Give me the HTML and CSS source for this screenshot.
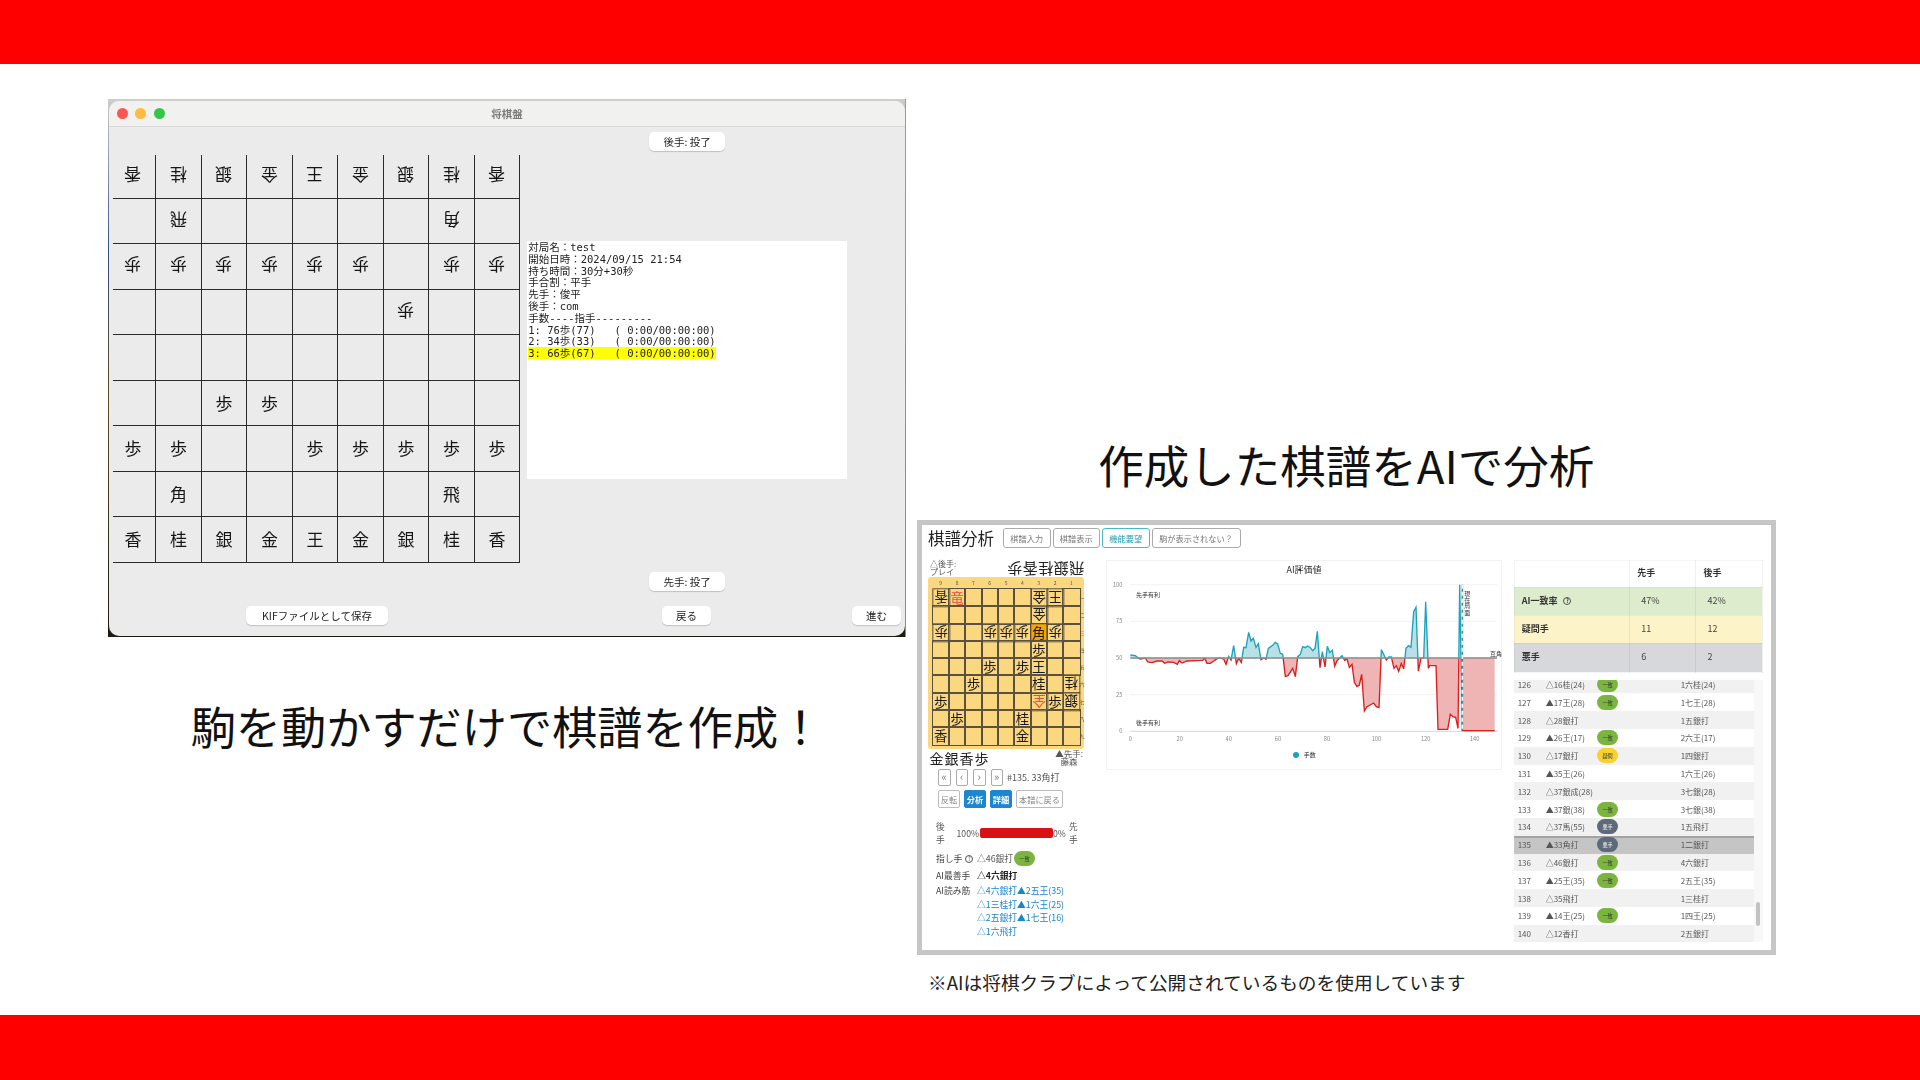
FILE: index.html
```html
<!DOCTYPE html>
<html lang="ja">
<head>
    <meta charset="UTF-8">
    <meta name="viewport" content="width=device-width, initial-scale=1.0">
    <title>将棋盤</title>
    <link rel="stylesheet" href="styles.css">
</head>
<body>
<div class="slide">
    <div class="red-bar top"></div>

    <div class="content">
        <!-- left: desktop app -->
        <div class="col-left">
            <div class="shot">
                <div class="win">
                    <div class="titlebar">
                        <div class="lights"><i class="l-red"></i><i class="l-yellow"></i><i class="l-green"></i></div>
                        <div class="win-title">将棋盤</div>
                    </div>
                    <div class="win-main">
                        <div class="board">
                            <div class="sq"><span class="flip">香</span></div><div class="sq"><span class="flip">桂</span></div><div class="sq"><span class="flip">銀</span></div><div class="sq"><span class="flip">金</span></div><div class="sq"><span class="flip">王</span></div><div class="sq"><span class="flip">金</span></div><div class="sq"><span class="flip">銀</span></div><div class="sq"><span class="flip">桂</span></div><div class="sq"><span class="flip">香</span></div>
                            <div class="sq"></div><div class="sq"><span class="flip">飛</span></div><div class="sq"></div><div class="sq"></div><div class="sq"></div><div class="sq"></div><div class="sq"></div><div class="sq"><span class="flip">角</span></div><div class="sq"></div>
                            <div class="sq"><span class="flip">歩</span></div><div class="sq"><span class="flip">歩</span></div><div class="sq"><span class="flip">歩</span></div><div class="sq"><span class="flip">歩</span></div><div class="sq"><span class="flip">歩</span></div><div class="sq"><span class="flip">歩</span></div><div class="sq"></div><div class="sq"><span class="flip">歩</span></div><div class="sq"><span class="flip">歩</span></div>
                            <div class="sq"></div><div class="sq"></div><div class="sq"></div><div class="sq"></div><div class="sq"></div><div class="sq"></div><div class="sq"><span class="flip">歩</span></div><div class="sq"></div><div class="sq"></div>
                            <div class="sq"></div><div class="sq"></div><div class="sq"></div><div class="sq"></div><div class="sq"></div><div class="sq"></div><div class="sq"></div><div class="sq"></div><div class="sq"></div>
                            <div class="sq"></div><div class="sq"></div><div class="sq">歩</div><div class="sq">歩</div><div class="sq"></div><div class="sq"></div><div class="sq"></div><div class="sq"></div><div class="sq"></div>
                            <div class="sq">歩</div><div class="sq">歩</div><div class="sq"></div><div class="sq"></div><div class="sq">歩</div><div class="sq">歩</div><div class="sq">歩</div><div class="sq">歩</div><div class="sq">歩</div>
                            <div class="sq"></div><div class="sq">角</div><div class="sq"></div><div class="sq"></div><div class="sq"></div><div class="sq"></div><div class="sq"></div><div class="sq">飛</div><div class="sq"></div>
                            <div class="sq">香</div><div class="sq">桂</div><div class="sq">銀</div><div class="sq">金</div><div class="sq">王</div><div class="sq">金</div><div class="sq">銀</div><div class="sq">桂</div><div class="sq">香</div>
                        </div>
                        <div class="win-side">
                            <button class="mac-btn resign-top">後手: 投了</button>
                            <div class="kif">対局名：test
開始日時：2024/09/15 21:54
持ち時間：30分+30秒
手合割：平手
先手：俊平
後手：com
手数----指手---------
1: 76歩(77)   ( 0:00/00:00:00)
2: 34歩(33)   ( 0:00/00:00:00)
<span class="kif-now">3: 66歩(67)   ( 0:00/00:00:00)</span></div>
                            <button class="mac-btn resign-bottom">先手: 投了</button>
                        </div>
                    </div>
                    <div class="win-foot">
                        <button class="mac-btn save">KIFファイルとして保存</button>
                        <button class="mac-btn back">戻る</button>
                        <button class="mac-btn next">進む</button>
                    </div>
                </div>
            </div>
            <p class="caption">駒を動かすだけで棋譜を作成！</p>
        </div>

        <!-- right: web analysis -->
        <div class="col-right">
            <h1 class="caption heading">作成した棋譜をAIで分析</h1>
            <div class="panel">
                <div class="panel-head">
                    <div class="panel-title">棋譜分析</div>
                    <a class="tab w47">棋譜入力</a>
                    <a class="tab w47">棋譜表示</a>
                    <a class="tab w47 tab-teal">機能要望</a>
                    <a class="tab w89">駒が表示されない？</a>
                </div>
                <div class="panel-body">
                    <div class="play">
                        <div class="holder top">
                            <div class="who">△後手:<br>プレイ</div>
                            <div class="hand hand-rev"><span>飛</span><span>銀</span><span>桂</span><span>香</span><span>歩</span></div>
                        </div>
                        <div class="mini">
                            <b>9</b><b>8</b><b>7</b><b>6</b><b>5</b><b>4</b><b>3</b><b>2</b><b>1</b><b></b>
                            <i class="rev">香</i><i class="red">竜</i><i></i><i></i><i></i><i></i><i class="rev">金</i><i class="rev">王</i><i></i><b>一</b>
                            <i></i><i></i><i></i><i></i><i></i><i></i><i class="rev">金</i><i></i><i></i><b>二</b>
                            <i class="rev">歩</i><i></i><i></i><i class="rev">歩</i><i class="rev">歩</i><i class="rev">歩</i><i class="hot">角</i><i class="rev">歩</i><i></i><b>三</b>
                            <i></i><i></i><i></i><i></i><i></i><i></i><i>歩</i><i></i><i></i><b>四</b>
                            <i></i><i></i><i></i><i>歩</i><i></i><i>歩</i><i>王</i><i></i><i></i><b>五</b>
                            <i></i><i></i><i>歩</i><i></i><i></i><i></i><i>桂</i><i></i><i class="rev">桂</i><b>六</b>
                            <i>歩</i><i></i><i></i><i></i><i></i><i></i><i class="red rev">全</i><i>歩</i><i class="rev">銀</i><b>七</b>
                            <i></i><i>歩</i><i></i><i></i><i></i><i>桂</i><i></i><i></i><i></i><b>八</b>
                            <i>香</i><i></i><i></i><i></i><i></i><i>金</i><i></i><i></i><i></i><b>九</b>
                        </div>
                        <div class="holder bottom">
                            <div class="hand"><span>金</span><span>銀</span><span>香</span><span>歩</span></div>
                            <div class="who who-right">▲先手:<br>藤森</div>
                        </div>
                        <div class="nav">
                            <a class="nav-btn">«</a><a class="nav-btn">‹</a><a class="nav-btn">›</a><a class="nav-btn">»</a>
                            <span class="nav-text">#135. 33角打</span>
                        </div>
                        <div class="tools">
                            <a class="tool">反転</a><a class="tool tool-on">分析</a><a class="tool tool-on">詳細</a><a class="tool tool-wide">本譜に戻る</a>
                        </div>
                        <div class="meter">
                            <span class="meter-side">後<br>手</span>
                            <span class="meter-num">100%</span>
                            <span class="meter-bar"></span>
                            <span class="meter-zero">0%</span>
                            <span class="meter-side">先<br>手</span>
                        </div>
                        <div class="info">
                            <div class="info-key info-first">指し手 <span class="help">?</span></div>
                            <div class="info-val info-move">△46銀打<span class="badge good">一致</span></div>
                            <div class="info-key">AI最善手</div>
                            <div class="info-val info-best">△4六銀打</div>
                            <div class="info-key">AI読み筋</div>
                            <div class="info-val info-line">△4六銀打▲2五王(35)<br>△1三桂打▲1六王(25)<br>△2五銀打▲1七王(16)<br>△1六飛打</div>
                        </div>
                    </div>

                    <div class="chart">
                        <svg class="chart-svg" viewBox="32 15 1190 630" width="396.7" height="210">
                            <defs>
                                <clipPath id="cutUp"><rect x="0" y="0" width="1260" height="309"/></clipPath>
                                <clipPath id="cutDown"><rect x="0" y="309" width="1260" height="340"/></clipPath>
                                <polyline id="evalLine" points="105,300 120,302 130,310 135,312 150,309 157,321 170,323 185,318 200,318 208,325 218,321 235,322 246,328 252,317 260,324 275,318 300,317 322,316 328,309 335,325 345,325 355,318 362,313 372,308 385,312 392,328 400,304 407,315 415,272 423,326 430,310 438,322 445,277 452,278 460,232 467,258 474,250 482,277 489,266 497,314 505,309 512,313 519,280 533,270 540,262 547,267 555,295 562,298 570,364 578,362 592,340 600,365 607,305 615,298 622,275 630,278 637,273 645,278 652,287 659,280 666,229 674,338 681,290 689,336 696,274 703,293 711,286 718,333 725,317 740,302 748,316 755,312 762,337 770,328 777,382 785,395 792,390 799,358 807,468 815,455 835,444 843,455 851,458 858,284 865,298 873,315 880,306 888,306 896,340 903,332 910,349 918,325 925,342 932,280 940,272 947,277 955,170 962,157 969,348 977,310 985,308 991,140 999,340 1003,332 1022,332 1028,523 1057,523 1065,478 1073,485 1081,487 1088,520 1093,89 1101,527 1198,527"/>
                                <polygon id="evalArea" points="105,309 105,300 120,302 130,310 135,312 150,309 157,321 170,323 185,318 200,318 208,325 218,321 235,322 246,328 252,317 260,324 275,318 300,317 322,316 328,309 335,325 345,325 355,318 362,313 372,308 385,312 392,328 400,304 407,315 415,272 423,326 430,310 438,322 445,277 452,278 460,232 467,258 474,250 482,277 489,266 497,314 505,309 512,313 519,280 533,270 540,262 547,267 555,295 562,298 570,364 578,362 592,340 600,365 607,305 615,298 622,275 630,278 637,273 645,278 652,287 659,280 666,229 674,338 681,290 689,336 696,274 703,293 711,286 718,333 725,317 740,302 748,316 755,312 762,337 770,328 777,382 785,395 792,390 799,358 807,468 815,455 835,444 843,455 851,458 858,284 865,298 873,315 880,306 888,306 896,340 903,332 910,349 918,325 925,342 932,280 940,272 947,277 955,170 962,157 969,348 977,310 985,308 991,140 999,340 1003,332 1022,332 1028,523 1057,523 1065,478 1073,485 1081,487 1088,520 1093,89 1101,527 1198,527 1198,309"/>
                            </defs>
                            <text class="c-title" x="626" y="53" text-anchor="middle">AI評価値</text>
                            <line class="c-grid" x1="105" x2="1205" y1="89" y2="89"/>
                            <line class="c-grid" x1="105" x2="1205" y1="199" y2="199"/>
                            <line class="c-grid" x1="105" x2="1205" y1="419" y2="419"/>
                            <line class="c-axis" x1="105" x2="1205" y1="529" y2="529"/>
                            <text class="c-tick" x="81" y="95" text-anchor="end">100</text>
                            <text class="c-tick" x="81" y="205" text-anchor="end">75</text>
                            <text class="c-tick" x="81" y="315" text-anchor="end">50</text>
                            <text class="c-tick" x="81" y="425" text-anchor="end">25</text>
                            <text class="c-tick" x="81" y="535" text-anchor="end">0</text>
                            <text class="c-tick" x="105" y="559" text-anchor="middle">0</text>
                            <text class="c-tick" x="253" y="559" text-anchor="middle">20</text>
                            <text class="c-tick" x="400" y="559" text-anchor="middle">40</text>
                            <text class="c-tick" x="548" y="559" text-anchor="middle">60</text>
                            <text class="c-tick" x="695" y="559" text-anchor="middle">80</text>
                            <text class="c-tick" x="843" y="559" text-anchor="middle">100</text>
                            <text class="c-tick" x="991" y="559" text-anchor="middle">120</text>
                            <text class="c-tick" x="1138" y="559" text-anchor="middle">140</text>
                            <use class="c-fill-up" href="#evalArea" clip-path="url(#cutUp)"/>
                            <use class="c-fill-down" href="#evalArea" clip-path="url(#cutDown)"/>
                            <use class="c-line-up" href="#evalLine" clip-path="url(#cutUp)"/>
                            <use class="c-line-down" href="#evalLine" clip-path="url(#cutDown)"/>
                            <line class="c-mid" x1="105" x2="1205" y1="309" y2="309"/>
                            <line class="c-now" x1="1101" x2="1101" y1="89" y2="527"/>
                            <line class="c-now-dash" x1="1101" x2="1101" y1="89" y2="527"/>
                            <text class="c-note" x="122" y="127">先手有利</text>
                            <text class="c-note" x="122" y="511">後手有利</text>
                            <text class="c-note" x="1184" y="304">互角</text>
                            <text class="c-note c-vert" x="1116" y="106">現在局面</text>
                            <circle class="c-dot" cx="602" cy="600" r="9"/>
                            <text class="c-note" x="625" y="607">手数</text>
                        </svg>
                    </div>

                    <div class="stats">
                        <table class="summary">
                            <tr class="s-head"><td></td><td>先手</td><td>後手</td></tr>
                            <tr class="s-green"><td>AI一致率 <span class="help help-lg">?</span></td><td>47%</td><td>42%</td></tr>
                            <tr class="s-yellow"><td>疑問手</td><td>11</td><td>12</td></tr>
                            <tr class="s-gray"><td>悪手</td><td>6</td><td>2</td></tr>
                        </table>
                        <div class="moves-wrap">
                            <div class="moves">
                                <div class="moves-in">
                                    <div class="mv"><span>126</span><span>△16桂(24)</span><span><em class="badge good">一致</em></span><span>1六桂(24)</span></div>
                                    <div class="mv"><span>127</span><span>▲17王(28)</span><span><em class="badge good">一致</em></span><span>1七王(28)</span></div>
                                    <div class="mv"><span>128</span><span>△28銀打</span><span></span><span>1五銀打</span></div>
                                    <div class="mv"><span>129</span><span>▲26王(17)</span><span><em class="badge good">一致</em></span><span>2六王(17)</span></div>
                                    <div class="mv"><span>130</span><span>△17銀打</span><span><em class="badge doubt">疑問</em></span><span>1四銀打</span></div>
                                    <div class="mv"><span>131</span><span>▲35王(26)</span><span></span><span>1六王(26)</span></div>
                                    <div class="mv"><span>132</span><span>△37銀成(28)</span><span></span><span>3七銀(28)</span></div>
                                    <div class="mv"><span>133</span><span>▲37銀(38)</span><span><em class="badge good">一致</em></span><span>3七銀(38)</span></div>
                                    <div class="mv"><span>134</span><span>△37馬(55)</span><span><em class="badge bad">悪手</em></span><span>1五飛打</span></div>
                                    <div class="mv mv-now"><span>135</span><span>▲33角打</span><span><em class="badge bad">悪手</em></span><span>1二銀打</span></div>
                                    <div class="mv"><span>136</span><span>△46銀打</span><span><em class="badge good">一致</em></span><span>4六銀打</span></div>
                                    <div class="mv"><span>137</span><span>▲25王(35)</span><span><em class="badge good">一致</em></span><span>2五王(35)</span></div>
                                    <div class="mv"><span>138</span><span>△35飛打</span><span></span><span>1三桂打</span></div>
                                    <div class="mv"><span>139</span><span>▲14王(25)</span><span><em class="badge good">一致</em></span><span>1四王(25)</span></div>
                                    <div class="mv"><span>140</span><span>△12香打</span><span></span><span>2五銀打</span></div>
                                </div>
                            </div>
                            <div class="scroll"><div class="scroll-thumb"></div></div>
                        </div>
                    </div>
                </div>
            </div>
            <p class="note">※AIは将棋クラブによって公開されているものを使用しています</p>
        </div>
    </div>

    <div class="red-bar bottom"></div>
</div>
</body>
</html>
```

FILE: styles.css
```css
* {
    box-sizing: border-box;
}
body {
    margin: 0;
    background: #fff;
    font-family: "Noto Sans CJK JP", "Noto Sans", sans-serif;
    color: #111;
}
.slide {
    width: 1920px;
    height: 1080px;
    display: flex;
    flex-direction: column;
    overflow: hidden;
}
.red-bar {
    background: #ff0000;
    flex: none;
}
.red-bar.top {
    height: 64px;
}
.red-bar.bottom {
    height: 65px;
}
.content {
    flex: 1;
    display: flex;
}
.caption {
    margin: 0;
    font-size: 45.5px;
    font-weight: 400;
    line-height: 56px;
    text-align: center;
    color: #111;
}

/* left column */
.col-left {
    width: 917px;
    padding: 35px 0 0 108px;
}
.col-left .caption {
    width: 798px;
    margin-top: 61px;
    font-size: 45.2px;
}
.shot {
    width: 798px;
    height: 538px;
    padding: 2px 1px 1px;
    background:
        linear-gradient(#9a9a9a, #8a8a8a) right / 1px 100% no-repeat,
        linear-gradient(180deg, #cfcfca, #33507f 28%, #5c4a22 55%, #1d1a10);
    filter: blur(0.35px);
}
.win {
    height: 100%;
    background: #ebebeb;
    border-radius: 10px;
    overflow: hidden;
}
.titlebar {
    height: 26px;
    background: #f1f1ef;
    border-bottom: 1px solid #d9d9d9;
    display: flex;
    align-items: center;
    position: relative;
}
.lights {
    display: flex;
    gap: 7.3px;
    padding-left: 8px;
}
.lights i {
    width: 11px;
    height: 11px;
    border-radius: 50%;
}
.l-red {
    background: #fc5753;
}
.l-yellow {
    background: #fdbc40;
}
.l-green {
    background: #33c748;
}
.win-title {
    position: absolute;
    left: 0;
    right: 0;
    text-align: center;
    font-size: 10.5px;
    font-weight: 700;
    color: #7d7d7d;
}
.win-main {
    display: flex;
    height: 470px;
    padding-left: 3.7px;
}
.board {
    margin-top: 28px;
    display: grid;
    grid-template-columns: 43.5px repeat(8, 45.5px);
    grid-template-rows: 43.5px repeat(8, 45.5px);
    height: 407.5px;
}
.sq {
    border-right: 1px solid #2a2a2a;
    border-bottom: 1px solid #2a2a2a;
    display: flex;
    align-items: center;
    justify-content: center;
    padding-bottom: 1px;
    font-size: 17px;
    line-height: 1;
    color: #151515;
}
.sq:nth-child(9n+1) {
    padding-right: 2px;
}
.flip {
    display: block;
    transform: rotate(180deg);
}
.win-side {
    margin-left: 7px;
    width: 320px;
    display: flex;
    flex-direction: column;
    align-items: center;
}
.mac-btn {
    height: 19px;
    padding: 0;
    border: none;
    border-radius: 5px;
    background: #fff;
    box-shadow: 0 1px 1px rgba(0, 0, 0, 0.18);
    font-family: inherit;
    font-size: 10.5px;
    line-height: 19px;
    color: #222;
    flex: none;
}
.resign-top {
    width: 76px;
    margin-top: 5px;
}
.resign-bottom {
    width: 76px;
    margin-top: 93px;
}
.kif {
    width: 320px;
    height: 238px;
    flex: none;
    margin-top: 90px;
    padding: 1px 1px;
    background: #fff;
    font-family: "DejaVu Sans Mono", "Noto Sans CJK JP", monospace;
    font-size: 10.5px;
    line-height: 11.8px;
    white-space: pre;
    color: #222;
}
.kif-now {
    background: #ffff00;
}
.win-foot {
    display: flex;
    padding-top: 9px;
}
.save {
    width: 142px;
    margin-left: 137px;
}
.back {
    width: 49px;
    margin-left: 274px;
}
.next {
    width: 49px;
    margin-left: 141px;
}

/* right column */
.col-right {
    width: 858.5px;
    padding-top: 372px;
}
.heading {
    width: 858.5px;
    height: 84px;
}
.panel {
    width: 858.5px;
    height: 435px;
    border: 5px solid #c6c6c6;
    background: #fff;
    overflow: hidden;
    filter: blur(0.35px);
}
.panel-head {
    display: flex;
    align-items: center;
    height: 20px;
    margin-top: 3px;
    padding-left: 6px;
    gap: 2px;
}
.panel-title {
    font-size: 16.5px;
    line-height: 20px;
    width: 73px;
    color: #222;
}
.tab {
    height: 20px;
    border: 1px solid #aaa;
    border-radius: 3px;
    font-size: 8.2px;
    line-height: 18px;
    text-align: center;
    color: #777;
}
.w47 {
    width: 47.5px;
}
.w89 {
    width: 89px;
}
.tab-teal {
    border-color: #4bb8c9;
    color: #1f9fb4;
}
.panel-body {
    display: grid;
    grid-template-columns: 166px 396.7px 249px;
    column-gap: 11.5px;
    padding: 12px 0 0 6px;
}

/* left part of analysis */
.holder {
    display: flex;
    justify-content: space-between;
}
.holder.top {
    height: 17px;
    padding: 0 10px 0 2px;
}
.holder.bottom {
    height: 18px;
    width: 156px;
    padding: 1px 1px 0 1px;
}
.who {
    font-size: 8px;
    line-height: 8px;
    color: #555;
}
.who-right {
    text-align: center;
    font-size: 8.5px;
    margin-top: -1px;
}
.hand {
    display: flex;
    font-size: 14px;
    line-height: 16px;
    color: #222;
}
.hand span {
    width: 15px;
    text-align: center;
}
.hand-rev {
    font-size: 15px;
    transform: rotate(180deg);
}
.hand-rev span {
    width: 15.5px;
}
.mini {
    width: 156.4px;
    height: 172px;
    background: #fbd77f;
    border-radius: 3px;
    padding-left: 4.6px;
    display: grid;
    grid-template-columns: repeat(9, 16.33px) 5px;
    grid-template-rows: 12px repeat(9, 17.3px);
}
.mini b {
    font-size: 5px;
    font-weight: 400;
    line-height: 12px;
    text-align: center;
    color: #555;
}
.mini b:nth-child(10n) {
    line-height: 17px;
    white-space: nowrap;
}
.mini i {
    font-style: normal;
    outline: 1px solid #5a5140;
    outline-offset: -0.5px;
    font-size: 13.5px;
    line-height: 17px;
    text-align: center;
    color: #1a1a1a;
}
.mini .rev {
    transform: rotate(180deg);
}
.mini .red {
    color: #f0493a;
}
.mini .hot {
    background: #f9a400;
}
.nav {
    display: flex;
    align-items: center;
    gap: 5px;
    height: 17px;
    margin-top: 2px;
    padding-left: 10px;
}
.nav-btn {
    width: 12.5px;
    height: 17px;
    border: 1px solid #aaa;
    border-radius: 2px;
    font-size: 11px;
    line-height: 13px;
    text-align: center;
    color: #777;
}
.nav-text {
    font-size: 9px;
    color: #555;
    margin-left: -1px;
}
.tools {
    display: flex;
    gap: 4px;
    height: 18px;
    margin-top: 4px;
    padding-left: 10px;
}
.tool {
    width: 22px;
    border: 1px solid #bbb;
    border-radius: 2px;
    font-size: 8.2px;
    line-height: 16px;
    text-align: center;
    color: #888;
}
.tool-wide {
    width: 47px;
}
.tool-on {
    border-color: #1a87d0;
    background: #1a87d0;
    color: #fff;
    font-weight: 700;
}
.meter {
    display: flex;
    align-items: center;
    height: 26px;
    margin-top: 12px;
    padding-left: 8px;
    font-size: 8.7px;
    color: #555;
}
.meter-side {
    width: 8px;
    line-height: 13px;
}
.meter-num {
    width: 35px;
    text-align: right;
    margin-right: 1px;
}
.meter-bar {
    width: 73px;
    height: 10.5px;
    background: #d81212;
    border-radius: 2px;
}
.meter-zero {
    width: 16px;
}
.info {
    display: grid;
    grid-template-columns: 41px 1fr;
    margin-top: 3px;
    padding-left: 8px;
    font-size: 8.8px;
    color: #444;
    line-height: 15px;
}
.info-key,
.info-val {
    white-space: nowrap;
}
.info-move {
    display: flex;
    align-items: center;
    height: 19px;
    color: #555;
}
.info-first {
    line-height: 19px;
}
.info-best {
    font-weight: 700;
    color: #222;
}
.info-line {
    color: #1a86cc;
    line-height: 13.6px;
    padding-top: 1px;
}
.help {
    display: inline-block;
    width: 8px;
    height: 8px;
    border: 1px solid #555;
    border-radius: 50%;
    font-size: 5.5px;
    line-height: 6px;
    text-align: center;
    vertical-align: 1px;
    margin-left: 1px;
}
.help-lg {
    margin-left: 4px;
}
.badge {
    display: inline-block;
    width: 20.5px;
    height: 15px;
    border-radius: 8px;
    font-size: 5.2px;
    font-style: normal;
    font-weight: 400;
    line-height: 15px;
    text-align: center;
    color: #333;
}
.info-move .badge {
    margin-left: 1px;
}
.good {
    background: #7ab53f;
}
.doubt {
    background: #f8d030;
}
.bad {
    background: #5e6a79;
    color: #fff;
}

/* chart */
.chart {
    height: 210px;
    border: 1px solid #f2f2f2;
}
.chart-svg {
    display: block;
    margin: -1px;
}
.c-title {
    font-size: 27px;
    fill: #333;
}
.c-grid {
    stroke: #eeeff4;
    stroke-width: 2.5;
}
.c-axis {
    stroke: #cdd8ec;
    stroke-width: 3;
}
.c-tick {
    font-size: 17px;
    fill: #888;
}
.c-note {
    font-size: 18px;
    fill: #333;
}
.c-vert {
    writing-mode: vertical-rl;
    letter-spacing: 1px;
}
.c-fill-up {
    fill: #b8e0e6;
}
.c-fill-down {
    fill: #efb5b5;
}
.c-line-up {
    fill: none;
    stroke: #1ba3bb;
    stroke-width: 4;
}
.c-line-down {
    fill: none;
    stroke: #e01b1b;
    stroke-width: 4;
}
.c-mid {
    stroke: #8f8f8f;
    stroke-width: 6;
    opacity: 0.8;
}
.c-now {
    stroke: #3d8e9e;
    stroke-width: 5;
}
.c-now-dash {
    stroke: #fff;
    stroke-width: 5;
    stroke-dasharray: 12 9;
}
.c-dot {
    fill: #1ba3bb;
}

/* summary + moves */
.summary {
    width: 249px;
    border-collapse: collapse;
    table-layout: fixed;
    font-size: 9px;
    color: #444;
}
.summary td {
    padding: 0 0 2px 7px;
    border: 1px solid rgba(0, 0, 0, 0.04);
    border-right-color: rgba(0, 0, 0, 0.06);
}
.summary td:first-child {
    width: 115.5px;
    font-weight: 700;
    color: #333;
}
.summary td:nth-child(2),
.summary td:nth-child(3) {
    padding-left: 11px;
}
.s-head {
    height: 26.7px;
}
.s-head td {
    font-weight: 700;
    padding-left: 7px !important;
    color: #333;
}
.s-green {
    height: 28.3px;
    background: #deecce;
}
.s-yellow {
    height: 28px;
    background: #fdf3c8;
}
.s-gray {
    height: 28.7px;
    background: #d6d8dc;
}
.moves-wrap {
    display: flex;
    margin-top: 7px;
    height: 262px;
}
.moves {
    width: 239.5px;
    margin-left: 0.7px;
    height: 262px;
    overflow: hidden;
}
.moves-in {
    margin-top: -4px;
}
.mv {
    display: grid;
    grid-template-columns: 31.3px 51.7px 83.3px 1fr;
    align-items: center;
    height: 17.8px;
    font-size: 8px;
    color: #555;
    white-space: nowrap;
}
.mv:nth-child(odd) {
    background: #f1f1f1;
}
.mv span:first-child {
    padding-left: 3.3px;
}
.mv span:nth-child(3) {
    display: flex;
}
.mv-now,
.mv-now:nth-child(odd) {
    background: #c5c5c5;
    box-shadow: inset 0 2px 0 #a3a3a3;
}
.scroll {
    width: 9px;
    background: #f8f8f8;
    padding: 222px 2.7px 0;
}
.scroll-thumb {
    height: 24px;
    border-radius: 2px;
    background: #c2c2c2;
}
.note {
    margin: 13px 0 0 11px;
    font-size: 18.7px;
    line-height: 27px;
    color: #222;
}
```
